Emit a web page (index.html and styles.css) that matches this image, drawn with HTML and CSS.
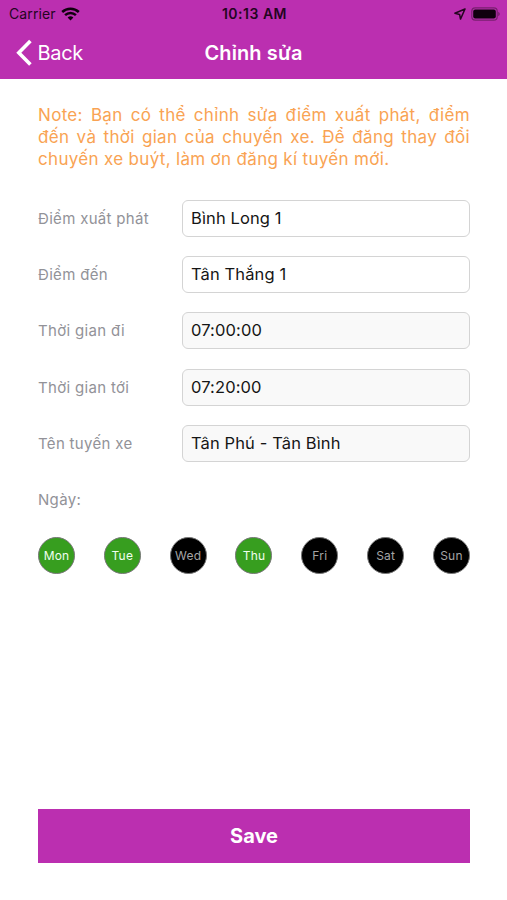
FILE: index.html
```html
<!DOCTYPE html>
<html lang="vi">
<head>
<meta charset="utf-8">
<title>Chỉnh sửa</title>
<link rel="stylesheet" href="styles.css">
</head>
<body>
<header class="header">
  <div class="status">
    <div class="status-left"><span class="carrier">Carrier</span>
      <svg class="wifi" width="19" height="14" viewBox="0 0 19 14"><path d="M9.5 13.4 6.6 10.6a4.2 4.2 0 0 1 5.8 0z"/><path class="arc" d="M4.1 8.1a7.8 7.8 0 0 1 10.8 0M1.2 5a12 12 0 0 1 16.6 0"/></svg>
    </div>
    <span class="clock">10:13 AM</span>
    <div class="status-right">
      <svg class="location" width="12" height="12" viewBox="0 0 12 12"><path d="M11 1 .9 5.3l4.7 1.1.9 4.7z"/></svg>
      <svg class="battery" width="29" height="14" viewBox="0 0 29 14"><rect class="shell" x=".8" y=".8" width="25.4" height="12.4" rx="3.4"/><rect x="2.2" y="2.4" width="22.6" height="9.2" rx="2"/><path class="cap" d="M27.2 4.8q1.6.8 1.6 2.2t-1.6 2.2z"/></svg>
    </div>
  </div>
  <nav class="nav">
    <a class="back"><svg width="17" height="28" viewBox="0 0 17 28"><path d="M14.4 2 2.8 13.8 14.4 25.6"/></svg><span>Back</span></a>
    <h1 class="title">Chỉnh sửa</h1>
  </nav>
</header>
<main class="content">
  <p class="note">Note: Bạn có thể chỉnh sửa điểm xuất phát, điểm đến và thời gian của chuyến xe. Để đăng thay đổi chuyến xe buýt, làm ơn đăng kí tuyến mới.</p>
  <div class="form">
    <div class="row"><span class="label">Điểm xuất phát</span><div class="field">Bình Long 1</div></div>
    <div class="row"><span class="label">Điểm đến</span><div class="field">Tân Thắng 1</div></div>
    <div class="row"><span class="label">Thời gian đi</span><div class="field locked">07:00:00</div></div>
    <div class="row"><span class="label">Thời gian tới</span><div class="field locked">07:20:00</div></div>
    <div class="row"><span class="label">Tên tuyến xe</span><div class="field locked">Tân Phú - Tân Bình</div></div>
    <div class="row"><span class="label">Ngày:</span></div>
  </div>
  <div class="days">
    <span class="day on">Mon</span><span class="day on">Tue</span><span class="day">Wed</span><span class="day on">Thu</span><span class="day">Fri</span><span class="day">Sat</span><span class="day">Sun</span>
  </div>
  <button class="save">Save</button>
</main>
</body>
</html>
```
FILE: styles.css
```css
* { box-sizing: border-box; }
body {
  margin: 0;
  height: 900px;
  display: flex;
  flex-direction: column;
  background: #fff;
  font-family: Inter, "Liberation Sans", sans-serif;
}
.header { height: 79px; background: #bb2fb0; flex: none; }
.status {
  height: 27px;
  display: grid;
  grid-template-columns: 1fr auto 1fr;
  align-items: center;
  padding: 0 7px 0 9px;
  color: #24051f;
}
.status-left { display: flex; align-items: center; gap: 5px; }
.status-right { display: flex; align-items: center; justify-content: flex-end; gap: 5px; }
.carrier { font-size: 14px; letter-spacing: .1px; }
.clock { font-size: 14px; font-weight: 600; letter-spacing: .5px; }
.wifi, .battery { fill: #10000e; }
.wifi .arc { fill: none; stroke: #10000e; stroke-width: 2.5; }
.location path { fill: none; stroke: #24051f; stroke-width: 1.5; stroke-linejoin: round; }
.battery .shell { fill: none; stroke: #79206f; stroke-width: 1.2; }
.battery .cap { fill: #79206f; }
.nav {
  height: 51px;
  display: grid;
  grid-template-columns: 1fr auto 1fr;
  align-items: center;
  padding: 0 16px;
  color: #fff;
}
.back { display: flex; align-items: center; gap: 4.5px; font-size: 20px; letter-spacing: -.3px; }
.back path { fill: none; stroke: #fff; stroke-width: 3.6; }
.title { margin: 0; font-size: 20px; font-weight: 600; letter-spacing: .1px; }
.content { flex: 1; display: flex; flex-direction: column; padding: 25px 37px 37px 38px; }
.note { margin: 0; font-size: 17px; line-height: 22px; letter-spacing: .32px; color: #f9a353; text-align: justify; }
.form { display: flex; flex-direction: column; gap: 19.2px; margin-top: 30px; }
.row { height: 37px; display: flex; align-items: center; }
.label { width: 143.5px; font-size: 15px; letter-spacing: .32px; color: #929298; }
.field {
  flex: 1;
  height: 37px;
  border: 1.5px solid #d4d4d4;
  border-radius: 6px;
  padding: 0 8.5px;
  font-size: 16.5px;
  letter-spacing: .12px;
  line-height: 35px;
  color: #151515;
}
.locked { background: #f9f9f9; }
.days { display: flex; justify-content: space-between; margin-top: 19px; }
.day {
  width: 37px;
  height: 37px;
  border: 1px solid #777;
  border-radius: 50%;
  background: #000;
  color: #a5a5a5;
  font-size: 12px;
  letter-spacing: .2px;
  line-height: 35px;
  text-align: center;
}
.on { background: #379e1f; color: #f0fff0; }
.save {
  margin-top: auto;
  height: 54px;
  border: 0;
  background: #bb2fb0;
  color: #fff;
  font: 700 20px Inter, "Liberation Sans", sans-serif;
}
```
